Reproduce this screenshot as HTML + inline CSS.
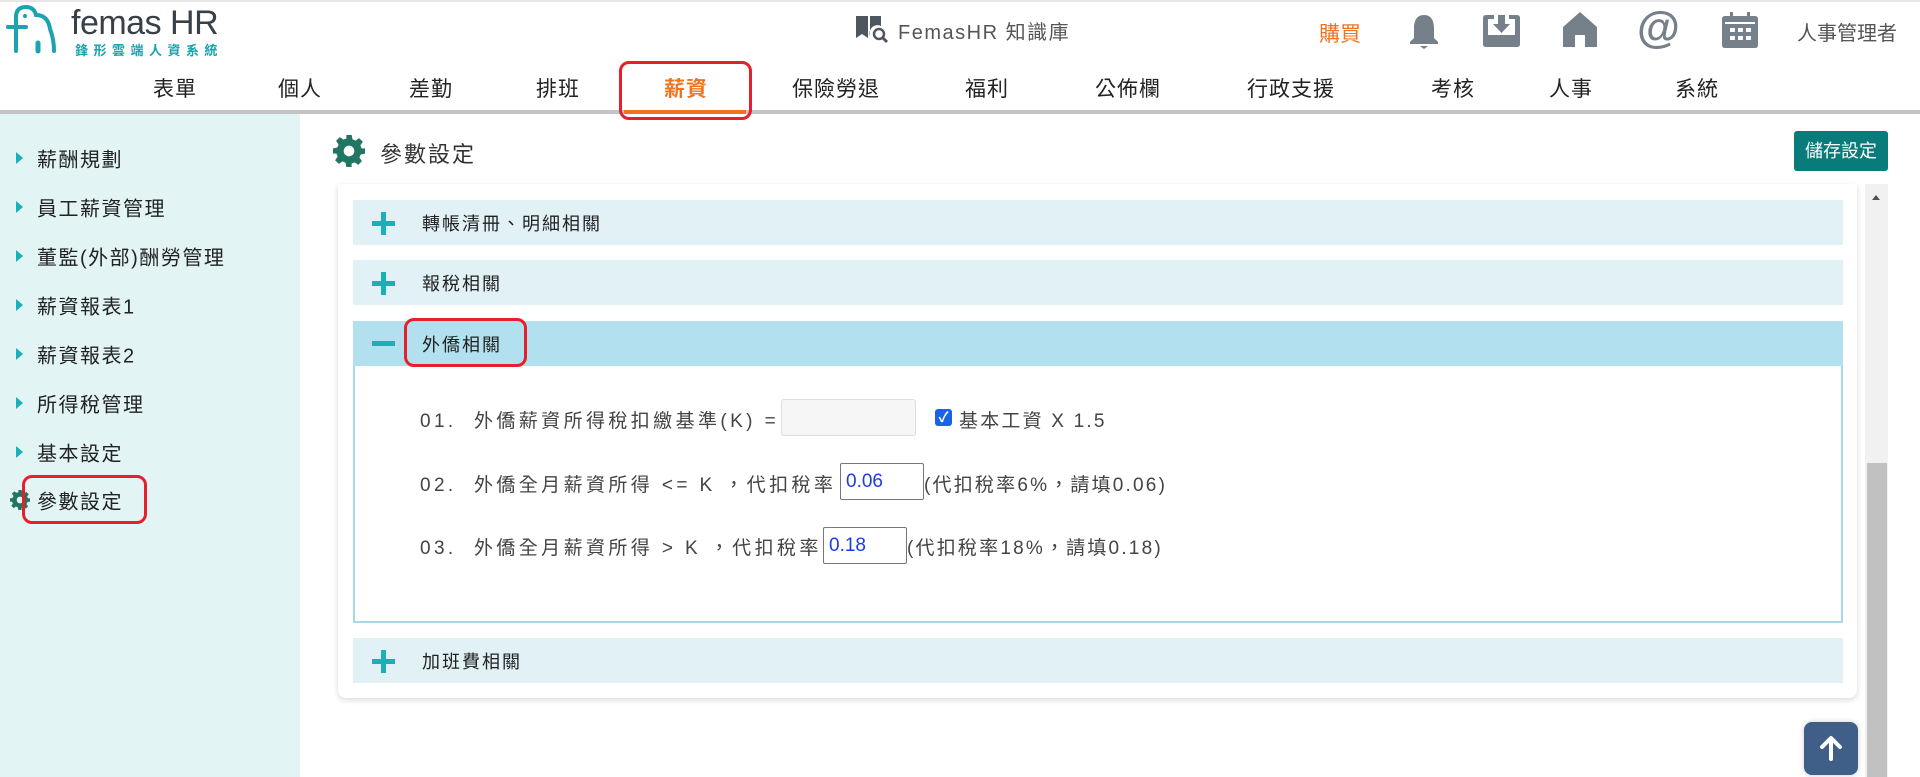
<!DOCTYPE html>
<html><head><meta charset="utf-8">
<style>
*{margin:0;padding:0;box-sizing:border-box}
body{width:1920px;height:777px;overflow:hidden;background:#fff;font-family:"Liberation Sans","Noto Sans CJK TC",sans-serif;position:relative;color:#222}
.abs{position:absolute}
.nav{position:absolute;top:73px;font-size:21px;color:#222;transform:translateX(-50%);letter-spacing:1px;white-space:nowrap}
.side{position:absolute;left:0;top:114px;width:300px;height:663px;background:#e3f4f5}
.si{position:absolute;left:37px;font-size:20px;color:#222;letter-spacing:1.5px;transform:translateY(-50%)}
.tri{position:absolute;left:16px;width:0;height:0;border-top:6px solid transparent;border-bottom:6px solid transparent;border-left:7px solid #1ab0b8;transform:translateY(-50%)}
.row{position:absolute;left:353px;width:1490px;height:45px;background:#e1f1f6}
.row .t{position:absolute;left:69px;top:50%;transform:translateY(-50%);font-size:18px;letter-spacing:2px;color:#222}
.plus{position:absolute;left:19px;top:12px;width:23px;height:23px}
.plus:before{content:"";position:absolute;left:0;top:9px;width:23px;height:5px;background:#1ab0b8}
.plus:after{content:"";position:absolute;left:9px;top:0;width:5px;height:23px;background:#1ab0b8}
.ln{position:absolute;left:420px;font-size:19px;color:#444;white-space:nowrap;letter-spacing:3.4px}
.ln2{letter-spacing:2.2px}
.inp{position:absolute;border:1px solid #777;border-radius:2px;background:#fff;font-size:19px;color:#1a3ce0;padding-left:5px;line-height:35px}
.ic{fill:#76808a}
</style></head><body>
<div class="abs" style="left:0;top:0;width:1920px;height:2px;background:#e6e6e6"></div>
<svg class="abs" style="left:4px;top:3px" width="56" height="52" viewBox="0 0 56 52"><path d="M4 24 H22 M12 48 V14 Q12 4 22 4 Q30 4 32 12 Q44 12 46 26 Q50 36 50 48" fill="none" stroke="#1ba3b0" stroke-width="4" stroke-linecap="round"/><path d="M34 48 V40" stroke="#1ba3b0" stroke-width="5" stroke-linecap="round"/><circle cx="21" cy="13" r="2" fill="#1ba3b0"/></svg>
<div class="abs" style="left:71px;top:4px;font-size:34px;color:#3a4048;letter-spacing:-0.5px">femas HR</div>
<div class="abs" style="left:75px;top:40px;font-size:13px;color:#1ba3b0;letter-spacing:5.5px;font-weight:bold">鋒形雲端人資系統</div>
<svg class="abs" style="left:855px;top:14px" width="34" height="30" viewBox="0 0 34 30"><path d="M1 2 H13 V24 L7 20 L1 24Z M15 2 H26 V12 A8 8 0 0 0 15 22Z" fill="#4e575f"/><circle cx="24" cy="20" r="5" fill="none" stroke="#4e575f" stroke-width="2.5"/><path d="M28 24 L32 28" stroke="#4e575f" stroke-width="3"/></svg>
<div class="abs" style="left:898px;top:16px;font-size:20px;color:#555;letter-spacing:1.5px">FemasHR 知識庫</div>
<div class="abs" style="left:1319px;top:18px;font-size:21px;color:#f07420">購買</div>
<svg class="abs" style="left:1409px;top:14px" width="30" height="36" viewBox="0 0 30 36"><path class="ic" d="M15 1 C7 1 5 8 5 14 V24 L1 28 V30 H29 V28 L25 24 V14 C25 8 23 1 15 1Z M11 32 H19 L15 35Z"/></svg>
<svg class="abs" style="left:1483px;top:15px" width="37" height="32" viewBox="0 0 37 32"><path class="ic" d="M3 0 H11 V4 H5 V20 H32 V4 H26 V0 H34 Q37 0 37 3 V29 Q37 32 34 32 H3 Q0 32 0 29 V3 Q0 0 3 0Z M15 0 H22 V9 H27 L18.5 18 L10 9 H15Z"/></svg>
<svg class="abs" style="left:1563px;top:12px" width="34" height="35" viewBox="0 0 34 35"><path class="ic" d="M17 0 L34 15 V35 H22 V23 H12 V35 H0 V15Z"/></svg>
<div class="abs" style="left:1637px;top:3px;font-size:44px;font-weight:bold;color:#76808a">@</div>
<svg class="abs" style="left:1722px;top:12px" width="36" height="36" viewBox="0 0 36 36"><path class="ic" d="M8 0 H11 V4 H25 V0 H28 V4 H33 Q36 4 36 7 V33 Q36 36 33 36 H3 Q0 36 0 33 V7 Q0 4 3 4 H8Z"/><g fill="#fff"><rect x="3" y="10" width="30" height="2"/><rect x="8" y="16" width="5" height="4"/><rect x="16" y="16" width="5" height="4"/><rect x="24" y="16" width="5" height="4"/><rect x="8" y="24" width="5" height="4"/><rect x="16" y="24" width="5" height="4"/><rect x="24" y="24" width="5" height="4"/></g></svg>
<div class="abs" style="left:1797px;top:17px;font-size:20px;color:#555">人事管理者</div>
<div class="nav" style="left:175px">表單</div>
<div class="nav" style="left:300px">個人</div>
<div class="nav" style="left:431px">差勤</div>
<div class="nav" style="left:558px">排班</div>
<div class="nav" style="left:686px;color:#f07420;font-weight:bold">薪資</div>
<div class="nav" style="left:836px">保險勞退</div>
<div class="nav" style="left:987px">福利</div>
<div class="nav" style="left:1128px">公佈欄</div>
<div class="nav" style="left:1291px">行政支援</div>
<div class="nav" style="left:1453px">考核</div>
<div class="nav" style="left:1571px">人事</div>
<div class="nav" style="left:1697px">系統</div>
<div class="abs" style="left:0;top:110px;width:1920px;height:4px;background:#c4c4c4"></div>
<div class="abs" style="left:624px;top:110px;width:122px;height:4px;background:#f07420"></div>
<div class="abs" style="left:619px;top:61px;width:133px;height:59px;border:3px solid #e5202a;border-radius:10px"></div>
<div class="side"></div>
<div class="tri" style="top:158px"></div><div class="si" style="top:158px">薪酬規劃</div>
<div class="tri" style="top:207px"></div><div class="si" style="top:207px">員工薪資管理</div>
<div class="tri" style="top:256px"></div><div class="si" style="top:256px">董監(外部)酬勞管理</div>
<div class="tri" style="top:305px"></div><div class="si" style="top:305px">薪資報表1</div>
<div class="tri" style="top:354px"></div><div class="si" style="top:354px">薪資報表2</div>
<div class="tri" style="top:403px"></div><div class="si" style="top:403px">所得稅管理</div>
<div class="tri" style="top:452px"></div><div class="si" style="top:452px">基本設定</div>
<svg class="abs" style="left:10px;top:490px" width="20" height="20" viewBox="0 0 24 24"><path fill="#227463" d="M10 0h4l.6 3.2 2.3 1 2.7-1.9 2.8 2.8-1.9 2.7 1 2.3L24 10v4l-3.2.6-1 2.3 1.9 2.7-2.8 2.8-2.7-1.9-2.3 1L14 24h-4l-.6-3.2-2.3-1-2.7 1.9-2.8-2.8 1.9-2.7-1-2.3L0 14v-4l3.2-.6 1-2.3-1.9-2.7 2.8-2.8 2.7 1.9 2.3-1z M12 8a4 4 0 1 0 0 8 4 4 0 1 0 0-8z"/></svg>
<div class="si" style="top:500px">參數設定</div>
<div class="abs" style="left:22px;top:475px;width:125px;height:49px;border:3px solid #e5202a;border-radius:10px"></div>
<svg class="abs" style="left:333px;top:135px" width="32" height="32" viewBox="0 0 24 24"><path fill="#227463" d="M10 0h4l.6 3.2 2.3 1 2.7-1.9 2.8 2.8-1.9 2.7 1 2.3L24 10v4l-3.2.6-1 2.3 1.9 2.7-2.8 2.8-2.7-1.9-2.3 1L14 24h-4l-.6-3.2-2.3-1-2.7 1.9-2.8-2.8 1.9-2.7-1-2.3L0 14v-4l3.2-.6 1-2.3-1.9-2.7 2.8-2.8 2.7 1.9 2.3-1z M12 8a4 4 0 1 0 0 8 4 4 0 1 0 0-8z"/></svg>
<div class="abs" style="left:380px;top:137px;font-size:22px;color:#333;letter-spacing:2px">參數設定</div>
<div class="abs" style="left:1794px;top:131px;width:94px;height:40px;background:#0a7b7b;border-radius:3px;color:#fff;font-size:18px;text-align:center;line-height:40px">儲存設定</div>
<div class="abs" style="left:338px;top:184px;width:1519px;height:514px;background:#fff;border-radius:0 0 8px 8px;box-shadow:0 2px 6px rgba(0,0,0,.15)"></div>
<div class="row" style="top:200px"><div class="plus"></div><div class="t">轉帳清冊、明細相關</div></div>
<div class="row" style="top:260px"><div class="plus"></div><div class="t">報稅相關</div></div>
<div class="row" style="top:321px;background:#b3e0ee"><div class="abs" style="left:19px;top:20px;width:23px;height:5px;background:#1ab0b8"></div><div class="t">外僑相關</div></div>
<div class="abs" style="left:353px;top:366px;width:1490px;height:257px;border:2px solid #a9d7e7;border-top:none"></div>
<div class="abs" style="left:404px;top:318px;width:123px;height:49px;border:3px solid #e5202a;border-radius:10px"></div>
<div class="ln" style="top:406px">01.&nbsp;&nbsp;外僑薪資所得稅扣繳基準(K) =</div>
<div class="abs" style="left:781px;top:399px;width:135px;height:37px;background:#f6f6f6;border:1px solid #ddd;border-radius:3px"></div>
<div class="abs" style="left:935px;top:409px;width:17px;height:17px;background:#1a62e8;border-radius:3px;color:#fff;font-size:14px;line-height:17px;text-align:center;font-weight:bold">✓</div>
<div class="ln ln2" style="top:406px;left:959px">基本工資 X 1.5</div>
<div class="ln" style="top:470px">02.&nbsp;&nbsp;外僑全月薪資所得 &lt;= K ，代扣稅率</div>
<div class="inp" style="left:840px;top:463px;width:84px;height:37px">0.06</div>
<div class="ln ln2" style="top:470px;left:924px">(代扣稅率6%，請填0.06)</div>
<div class="ln" style="top:533px">03.&nbsp;&nbsp;外僑全月薪資所得 &gt; K ，代扣稅率</div>
<div class="inp" style="left:823px;top:527px;width:84px;height:37px">0.18</div>
<div class="ln ln2" style="top:533px;left:907px">(代扣稅率18%，請填0.18)</div>
<div class="row" style="top:638px"><div class="plus"></div><div class="t">加班費相關</div></div>
<div class="abs" style="left:1865px;top:184px;width:23px;height:593px;background:#f1f1f1"></div>
<div class="abs" style="left:1867px;top:463px;width:20px;height:314px;background:#c1c1c1"></div>
<div class="abs" style="left:1872px;top:195px;width:0;height:0;border-left:4px solid transparent;border-right:4px solid transparent;border-bottom:5px solid #505050"></div>
<div class="abs" style="left:1804px;top:722px;width:54px;height:53px;background:#3f5f88;border-radius:8px;box-shadow:0 0 6px rgba(0,0,0,.2)"></div>
<svg class="abs" style="left:1818px;top:735px" width="26" height="26" viewBox="0 0 26 26"><path d="M13 24 V4 M4 12 L13 3 L22 12" fill="none" stroke="#fff" stroke-width="4" stroke-linecap="round" stroke-linejoin="round"/></svg>
</body></html>
